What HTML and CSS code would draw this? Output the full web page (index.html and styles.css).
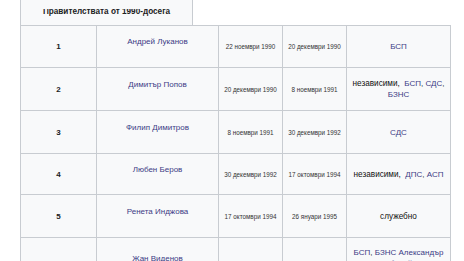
FILE: index.html
```html
<!DOCTYPE html>
<html lang="bg">
<head>
<meta charset="utf-8">
<link rel="stylesheet" href="styles.css">
</head>
<body>
<div class="page">
  <div class="tab"><div class="tab-clip"><span class="tab-title">Правителствата от 1990-досега</span></div></div>
  <table class="gov">
    <colgroup>
      <col class="c-num"><col class="c-name"><col class="c-date"><col class="c-date"><col class="c-party">
    </colgroup>
    <tbody>
      <tr class="r1">
        <td class="num">1</td>
        <td class="name"><a href="#">Андрей Луканов</a></td>
        <td class="date">22 ноември 1990</td>
        <td class="date">20 декември 1990</td>
        <td class="party"><a href="#">БСП</a></td>
      </tr>
      <tr class="r2">
        <td class="num">2</td>
        <td class="name"><a href="#">Димитър Попов</a></td>
        <td class="date">20 декември 1990</td>
        <td class="date">8 ноември 1991</td>
        <td class="party"><span class="plain">независими,</span> &nbsp;<a href="#">БСП</a>, <a href="#">СДС</a>, <a href="#">БЗНС</a></td>
      </tr>
      <tr class="r3">
        <td class="num">3</td>
        <td class="name"><a href="#">Филип Димитров</a></td>
        <td class="date">8 ноември 1991</td>
        <td class="date">30 декември 1992</td>
        <td class="party"><a href="#">СДС</a></td>
      </tr>
      <tr class="r4">
        <td class="num">4</td>
        <td class="name"><a href="#">Любен Беров</a></td>
        <td class="date">30 декември 1992</td>
        <td class="date">17 октомври 1994</td>
        <td class="party"><span class="plain">независими,</span> &nbsp;<a href="#">ДПС</a>, <a href="#">АСП</a></td>
      </tr>
      <tr class="r5">
        <td class="num">5</td>
        <td class="name"><a href="#">Ренета Инджова</a></td>
        <td class="date">17 октомври 1994</td>
        <td class="date">26 януари 1995</td>
        <td class="party"><span class="plain">служебно</span></td>
      </tr>
      <tr class="r6">
        <td class="num">6</td>
        <td class="name"><a href="#">Жан Виденов</a></td>
        <td class="date">26 януари 1995</td>
        <td class="date">12 февруари 1997</td>
        <td class="party"><a href="#">БСП</a>, <a href="#">БЗНС Александър Стамболийски</a>, <a href="#">Екогласност</a></td>
      </tr>
    </tbody>
  </table>
</div>
</body>
</html>
```

FILE: styles.css
```css
html, body {
  margin: 0;
  padding: 0;
  background: #ffffff;
}

body {
  font-family: "Liberation Sans", Arial, sans-serif;
  color: #202122;
}

.page {
  padding-left: 20px;
}

.tab {
  width: 173px;
  height: 25px;
  box-sizing: border-box;
  border-left: 1px solid #c8ccd1;
  border-right: 1px solid #c8ccd1;
  background: #f8f9fa;
  padding-top: 9px;
}

.tab-clip {
  height: 9px;
  overflow: hidden;
  text-align: center;
}

.tab-title {
  display: block;
  margin-top: -3px;
  font-size: 8.2px;
  line-height: 11px;
  font-weight: bold;
  color: #202122;
  white-space: nowrap;
}

.gov {
  border-collapse: collapse;
  table-layout: fixed;
  width: 430px;
  background: #f8f9fa;
}

.c-num { width: 76px; }
.c-name { width: 122px; }
.c-date { width: 64px; }
.c-party { width: 104px; }

.gov td {
  border: 1px solid #c8ccd1;
  text-align: center;
  vertical-align: middle;
  padding: 0 4px;
  box-sizing: border-box;
}

.r1 td { height: 42px; }
.r2 td { height: 43px; }
.r3 td { height: 43px; }
.r4 td { height: 41px; }
.r5 td { height: 43px; }
.r6 td { height: 52px; }

.gov a {
  color: #3c3b85;
  text-decoration: none;
}

.num {
  font-size: 8px;
  font-weight: bold;
  color: #202122;
}

.name {
  font-size: 8px;
  line-height: 11px;
  padding-bottom: 10px !important;
}

.date {
  font-size: 6.3px;
  color: #333333;
  white-space: nowrap;
}

.party {
  font-size: 8px;
  line-height: 11px;
}

.plain {
  color: #111111;
  font-size: 8.2px;
}
```
